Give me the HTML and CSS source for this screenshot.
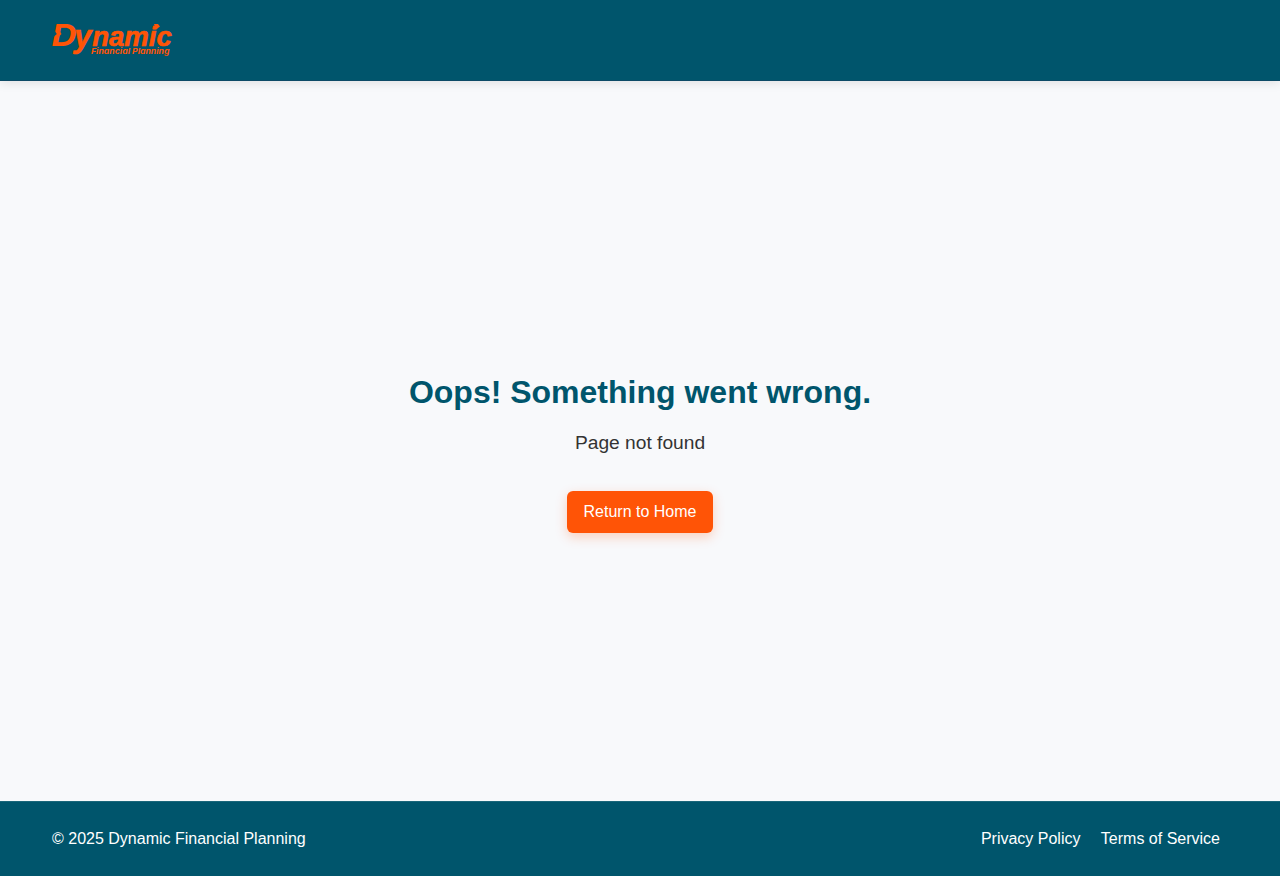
FILE: index.html
```html
<!DOCTYPE html>
<html lang="en">
<head>
<meta charset="utf-8">
<title>Dynamic Financial Planning</title>
<link rel="stylesheet" href="styles.css">
</head>
<body>
<header class="header">
  <a class="brand" href="#" aria-label="Dynamic Financial Planning">
    <svg class="logo" width="120" height="32" viewBox="0 0 120 32">
      <text class="logo-initial" x="-0.5" y="21.7" textLength="25" lengthAdjust="spacingAndGlyphs">D</text>
      <path class="logo-notch" d="M0 6.5H2.5L4.8 10L1.5 13H0Z"/>
      <path class="logo-mark" d="M6.5 5L9.5 10L5 14.5Z"/>
      <text class="logo-name" y="21.6"><tspan class="logo-y" x="22.2" y="22.6">y</tspan><tspan x="40.2" y="21.6" textLength="79.5" lengthAdjust="spacingAndGlyphs">namic</tspan></text>
      <path class="logo-mark" d="M102 0H106L108 2.5L104 5.5H101L103 3Z"/>
      <text class="logo-tagline" x="39" y="29.8" textLength="78.5" lengthAdjust="spacingAndGlyphs">Financial Planning</text>
    </svg>
  </a>
</header>
<main class="main">
  <h1 class="title">Oops! Something went wrong.</h1>
  <p class="message">Page not found</p>
  <a class="button" href="#">Return to Home</a>
</main>
<footer class="footer">
  <span>© 2025 Dynamic Financial Planning</span>
  <nav class="links">
    <a class="link" href="#">Privacy Policy</a>
    <a class="link" href="#">Terms of Service</a>
  </nav>
</footer>
</body>
</html>
```
FILE: styles.css
```css
* { box-sizing: border-box; }
body {
  margin: 0;
  height: 876px;
  display: flex;
  flex-direction: column;
  background: #f8f9fb;
  color: #333;
  font: 16px/24px "Liberation Sans", Arial, sans-serif;
}
a { text-decoration: none; }
.header {
  height: 81px;
  padding: 24px 52px;
  background: #00556c;
  border-bottom: 1px solid #0c4a66;
  box-shadow: 0 2px 10px rgba(0, 0, 0, .1);
}
.brand, .logo { display: block; width: 120px; height: 32px; }
.logo { overflow: visible; font-family: "Liberation Sans", Arial, sans-serif; font-style: italic; font-weight: 700; }
.logo text, .logo-mark { fill: #ff5406; }
.logo-notch { fill: #00556c; }
.logo-initial { font-family: Inter, sans-serif; font-size: 30px; }
.logo-name { font-size: 27px; stroke: #ff5406; stroke-width: .6px; }
.logo-y { font-size: 31px; }
.logo-tagline { font-family: Inter, sans-serif; font-size: 7.5px; }
.main {
  flex: 1;
  display: flex;
  flex-direction: column;
  align-items: center;
  justify-content: center;
  padding-top: 23px;
}
.title { margin: 0 0 17px; color: #00556c; font-size: 32px; line-height: 38px; }
.message { margin: 0 0 34px; font-size: 19.2px; line-height: 29px; }
.button {
  height: 42px;
  padding: 9px 16px;
  border-radius: 6px;
  background: #ff5406;
  color: #fff;
  width: 146px;
  text-align: center;
  box-shadow: 0 4px 12px rgba(255, 84, 6, .25);
}
.footer {
  height: 75px;
  padding: 0 60px 0 52px;
  display: flex;
  align-items: center;
  justify-content: space-between;
  background: #00556c;
  border-top: 1px solid #1a667a;
  color: #fff;
}
.links { display: flex; gap: 20.4px; }
.link { color: #fff; }
```
